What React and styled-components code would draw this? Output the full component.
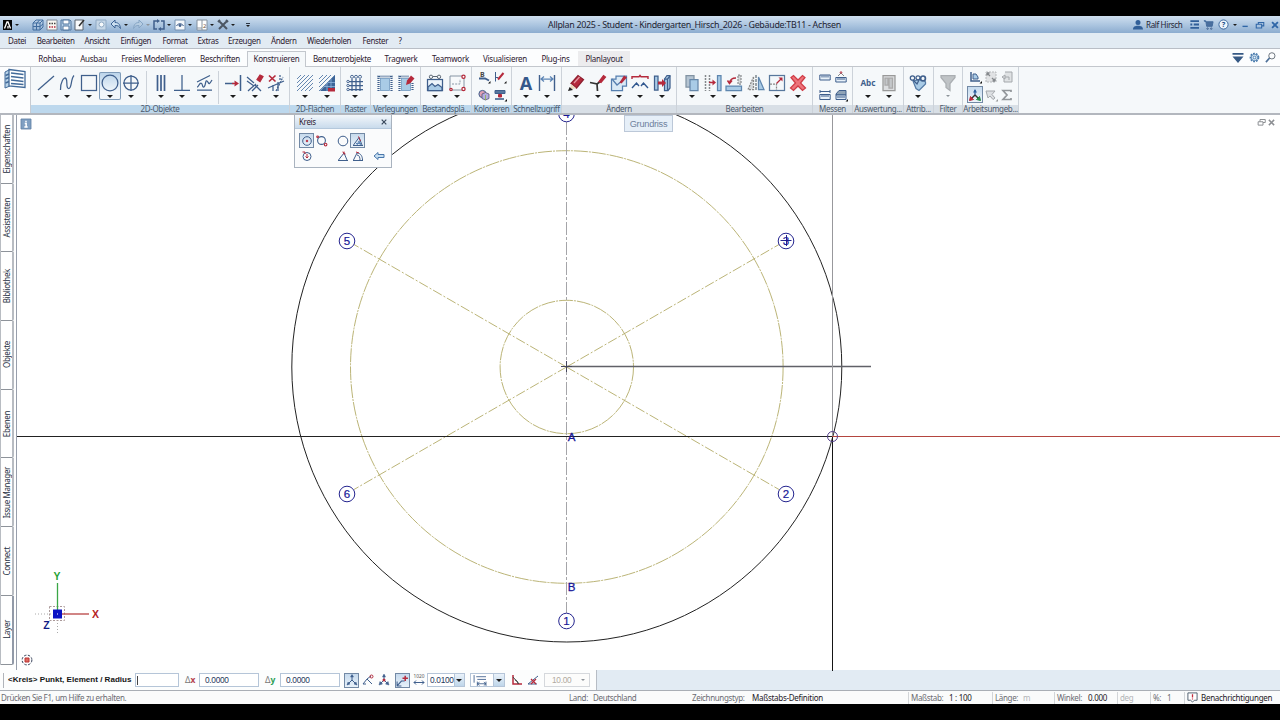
import styled, { createGlobalStyle, css } from 'styled-components';

const navy = '#3f5f8c';
const red = '#b52a3c';
const sky = '#a9cbe6';
const grey = '#a4a8ac';

/* ribbon drawings, all on an 18x18 grid */
const glyphs = {
  line: <path d='M1 16L17 2' />,
  spline: <path d='M2.5 16C2 9 6 2 8 4.500C10 7 7.500 14 10.500 14.500C14 15 12.500 5 16 1.500' />,
  rect: <rect x='1.5' y='1.5' width='15' height='15' />,
  circle: <circle cx='9' cy='9' r='7.9' />,
  axis: (
    <>
      <circle cx='9' cy='9' r='7' />
      <path d='M1 9H17M9 1V17' />
    </>
  ),
  parallel: <path d='M5.5 1V17M9 1V17M12.5 1V17' strokeWidth='1.7' />,
  perpendicular: <path d='M9 1V16M1 16.3H17' />,
  polyline: (
    <>
      <path d='M2 8L15 1.500M2 16H17' />
      <path d='M2 13C4 13 4 9 6 9S7 14 9 13S10 6 12 7S13 13 17 6' />
    </>
  ),
  extend: (
    <>
      <path d='M1 9.5H10M16.500 1V17' strokeWidth='1.5' />
      <path d='M8 9.5H12' stroke={red} />
      <path d='M10.500 6.500L15 9.500L10.500 12.500Z' fill={red} stroke='none' />
    </>
  ),
  trim: (
    <>
      <path d='M1 3L8 9M2 17C6 13 8 12 10 10M6 17L12 11M9 11L15 17M1 7L8 12' />
      <path d='M11 5.500L14 1L17 2.500L14 7.500Z' fill={red} stroke={red} />
    </>
  ),
  cut: (
    <>
      <path d='M1 14L17 7M6 17V11M11 17V8' />
      <path d='M13 1V6M9 17L16 3' strokeDasharray='2 1' />
      <path d='M2 1.500L8.500 7.500M8.500 1.500L2 7.500' stroke={red} strokeWidth='1.7' />
    </>
  ),
  hatch: (
    <path
      d='M1 5L5 1M1 9L9 1M1 13L13 1M1 17L17 1M5 17L17 5M9 17L17 9M13 17L17 13'
      stroke='#6587b1'
      strokeWidth='1'
    />
  ),
  hatchFill: (
    <>
      <path d='M17 1V17H2Z' fill='#3c6498' stroke='none' />
      <path d='M1 5L5 1M1 9L9 1M1 13L13 1M1 17L17 1' stroke='#6587b1' strokeWidth='1' />
      <path d='M9 9V17M13 5V14M6 12.500H17M10 8.500H17' stroke='#8fb4dc' strokeWidth='.8' />
      <path d='M10 14H17V17.500H10Z' fill={red} stroke='none' />
    </>
  ),
  grid: (
    <>
      <path d='M6 5V17M10 5V17M14 5V17M3 7.5H17M3 11.5H17M3 15.500H17' />
      <g strokeWidth='.9'>
        <circle cx='6' cy='2.800' r='1.500' />
        <circle cx='10' cy='2.800' r='1.500' />
        <circle cx='14' cy='2.800' r='1.500' />
        <circle cx='2' cy='7.5' r='1.200' />
        <circle cx='2' cy='11.5' r='1.200' />
        <circle cx='2' cy='15.500' r='1.200' />
      </g>
    </>
  ),
  laying: (
    <>
      <path d='M1.500 2.500H16.500M2.500 2V17M15.500 2V17' strokeWidth='2.2' strokeDasharray='1 1' />
      <rect x='4.500' y='4.500' width='9' height='12' fill={sky} stroke='#7098c0' strokeWidth='.8' />
    </>
  ),
  layingEdit: (
    <>
      <path d='M1.500 2.500H12M2.500 2V17M15.500 9V17' strokeWidth='2.2' strokeDasharray='1 1' />
      <rect x='4.500' y='4.500' width='9' height='12' fill={sky} stroke='#7098c0' strokeWidth='.8' />
      <path d='M9 11L10 6.500L14 1.500L17.500 4.500L13 9.500Z' fill={red} stroke='none' />
    </>
  ),
  picture: (
    <>
      <rect x='1.500' y='5.500' width='15' height='11' fill='#edf5fb' />
      <path d='M2 13L6 9.500L9 12.500L12 10.500L16 13.500V16.500H2Z' fill={sky} />
      <g stroke='#5d6874' strokeWidth='1'>
        <circle cx='5' cy='2.800' r='1.700' />
        <circle cx='13' cy='2.800' r='1.700' />
        <path d='M7 2.500H11' />
      </g>
    </>
  ),
  scan: (
    <>
      <path d='M2 2H16V16H2Z' fill='#f6f9fb' stroke='#7c8a9b' strokeWidth='.9' />
      <path d='M4 10H12V5' strokeDasharray='2 1.2' stroke='#7c8a9b' strokeWidth='.9' />
      <g stroke={red} fill='#fff'>
        <circle cx='15.500' cy='2.700' r='1.600' />
        <circle cx='15.500' cy='15' r='1.600' />
        <circle cx='3' cy='15.500' r='1.200' />
      </g>
    </>
  ),
  letterA: (
    <text x='9' y='15.500' textAnchor='middle' fill='#35588a' stroke='none' fontSize='18' fontWeight='700'>
      A
    </text>
  ),
  dimension: (
    <>
      <path d='M1.500 1V17M16.500 1V17' strokeWidth='1.4' />
      <path d='M3 5H15M6 2.500L3 5L6 7.500M12 2.500L15 5L12 7.500' stroke='#5d85b5' />
    </>
  ),
  pencil: (
    <>
      <path d='M4 9.500L11 1.500L16.500 5.500L9.500 14Z' fill={red} stroke='#8e2030' />
      <path d='M7 9L12.500 3' stroke='#e59aa3' />
      <path d='M4 10L9 14L3 16Z' fill='#ecdcc0' stroke='none' />
      <path d='M1 17L2.600 13L6 16Z' fill='#222' stroke='none' />
    </>
  ),
  brush: (
    <>
      <path d='M1 8.500L8 10L8.500 17M8 10L12 7' stroke='#333' strokeWidth='1.700' />
      <path d='M10 7.500L14.500 1.500L16.500 3L12 8.500Z' fill={red} stroke={red} />
    </>
  ),
  modifyArea: (
    <>
      <path d='M1.500 5H6V2H16.500V12H12.500V16.500H1.500Z' fill='#d9e9f5' stroke='#567faf' />
      <path d='M2 5L7 11L13 6' stroke='#567faf' />
      <path d='M9.500 8.500L14 1.500L17 3.500L11.500 9.500Z' fill={red} stroke='none' />
    </>
  ),
  stretch: (
    <>
      <path d='M1 5V2.800H8L9 1.500L10 2.800H17V5' stroke={red} strokeWidth='1.400' />
      <path d='M1 14L5.500 9L8 12M10 12L12.500 9L17 14' stroke='#31578f' strokeWidth='1.400' />
    </>
  ),
  shift: (
    <>
      <path d='M1.500 2H5V16H1.500Z' fill={sky} />
      <path d='M11.500 5L14 1.500H17V14L15 16.500H11.500Z' fill={sky} />
      <path d='M14.500 5V16M11.500 5H14.500L17 2' />
      <path d='M5 7.500H9V5L13 9L9 13V10.500H5Z' fill={red} stroke='none' />
    </>
  ),
  copy: (
    <>
      <path d='M3 1.500H11V13H3Z' fill='#b4c4d2' stroke='#8293a3' />
      <path d='M7 5.500H15V16.500H7Z' fill={sky} stroke='#6687a9' />
    </>
  ),
  move: (
    <>
      <path d='M1.500 1V17M5.500 1V17' stroke='#85898d' strokeWidth='1.500' strokeDasharray='2 1' />
      <path d='M5 8.500H10' stroke={red} strokeWidth='1.500' />
      <path d='M8.500 5.500L12 8.500L8.500 11.500Z' fill={red} stroke='none' />
      <path d='M13.500 1.500H17V16.500H13.500Z' fill={sky} stroke='#5e86af' />
    </>
  ),
  rotate: (
    <>
      <path d='M13 1H16V10H13Z' fill='#d3d6d9' stroke='#8d9093' strokeDasharray='2 1' />
      <path d='M1 12H16.500V16.500H1Z' fill={sky} stroke='#5e86af' />
      <path d='M11 4C7 4 5 5.500 4.500 9M2.500 6.500L4.500 9.500L7 6.500' stroke={red} strokeWidth='1.500' />
    </>
  ),
  mirror: (
    <>
      <path d='M6.500 3V15.500H1Z' stroke='#888' fill='#d3d7da' strokeDasharray='2 1' />
      <path d='M9 1V17' stroke='#67717c' strokeDasharray='3 1' />
      <path d='M11.500 3V15.500H17Z' fill={sky} stroke='#5e86af' />
    </>
  ),
  scale: (
    <>
      <rect x='1.500' y='1.500' width='15' height='15' fill='#f4f8fb' stroke='#58789d' />
      <path d='M2 10H8.500V16' stroke='#888' strokeDasharray='2 1' />
      <path d='M8.500 9.500L13 5' stroke={red} />
      <path d='M10.500 3.500H14.500V7.500Z' fill={red} stroke='none' />
    </>
  ),
  remove: (
    <path
      d='M2 3.500L4.500 1.500L9 6L13.500 1.500L16 3.500L11.500 9L16.500 14L13.500 16.500L9 12L4.500 16.500L1.500 14L6.500 9Z'
      fill='#ed747b'
      stroke='#d03c46'
    />
  ),
  abc: (
    <text x='9' y='12' textAnchor='middle' fill={navy} stroke='none' fontSize='8.2' fontWeight='700'>
      Abc
    </text>
  ),
  report: (
    <>
      <path d='M3 1.500H15V16.500H3Z' fill='#dcdee0' stroke='#999' />
      <path d='M5 4H8V11H5ZM9 4H12.500V14H9Z' fill='#c4c7ca' stroke='#aaa' />
    </>
  ),
  tag: (
    <>
      <path d='M4 7L14 5L16.500 8V10L10 16.500L7 14.500Z' fill={sky} stroke='#557ba6' />
      <g fill='#f5f8fa'>
        <circle cx='3.500' cy='4' r='2.200' />
        <circle cx='9' cy='3.800' r='2' />
        <circle cx='14' cy='4.400' r='2.400' strokeWidth='1.700' />
      </g>
      <path d='M4 6L8 10L10 6' />
    </>
  ),
  funnel: <path d='M2 1.500H16V3.500L11 9.500V16.500L7 13.500V9.500L2 3.500Z' fill='#bfc3c6' stroke='#aaaeb2' />,
};

/* small drawings, 12x12 grid */
const minis = {
  dot: (
    <>
      <circle cx='6' cy='6' r='4.3' />
      <circle cx='6' cy='6' r='.8' fill={red} stroke={red} />
    </>
  ),
  circlePts: (
    <>
      <circle cx='6' cy='6' r='3.6' />
      <g stroke={red} fill='#fff'>
        <circle cx='2.4' cy='2.6' r='.8' />
        <circle cx='9.8' cy='9.8' r='1.2' />
      </g>
    </>
  ),
  circleRed: (
    <>
      <circle cx='6' cy='6.5' r='4' />
      <path d='M6 4V8M4.500 6.500L6 8L7.500 6.500M1.500 2H4V4' stroke={red} />
    </>
  ),
  ring: <circle cx='6' cy='6' r='4.8' />,
  angle: (
    <>
      <path d='M1 10.5H11M1.500 10L7 3L10 10' />
      <path d='M5.500 2L8.500 4M7 1.500V4.500' stroke={red} />
    </>
  ),
  angleHatch: (
    <>
      <path d='M1 10.5H11M1.500 10L7 2.500L10 10' />
      <path d='M5 10L7 6L8.500 10M4 8.500H9' stroke='#5d85b5' />
      <path d='M6.500 1.500L8.500 6' stroke={red} />
    </>
  ),
  angleArc: (
    <>
      <path d='M1 10.5H11M1.500 10L5 3C9 3 10.500 7 10.500 10M5 5C7.500 5 8 8 8 10' />
      <path d='M4 2L7 3' stroke={red} />
    </>
  ),
  back: <path d='M1 6L5 2.500V4.500H11V7.500H5V9.500Z' fill='#c8dff1' stroke='#4977ab' />,
  fillPen: (
    <>
      <text x='2' y='6' fill='#444' stroke='none' fontSize='7' fontWeight='700'>B</text>
      <path d='M1 7.500H7L11 9.500' strokeWidth='1.800' />
      <path d='M12.500 10V12.500H10Z' fill='#111' stroke='none' />
    </>
  ),
  redPen: (
    <>
      <path d='M1.500 1V10.500M1.500 6.500H4' />
      <path d='M4 8.500L9.500 2' stroke={red} strokeWidth='2' />
      <path d='M12.500 10V12.500H10Z' fill='#111' stroke='none' />
    </>
  ),
  palette: (
    <>
      <circle cx='4.500' cy='5' r='3.600' fill='#dfa0b4' stroke={navy} />
      <path d='M4 5L7.500 3.500L11 5V9.500L7.500 11L4 9.500Z' fill='#b5addf' stroke='#557' strokeWidth='.8' />
      <path d='M7.500 6V11' stroke='#8b3' strokeWidth='.7' />
    </>
  ),
  roller: (
    <>
      <path d='M1 1.500H11V4.500H1Z' fill='#56779f' />
      <path d='M4.500 5.500H7.500V8H4.500Z' fill={red} stroke={red} />
      <path d='M1 10H10' strokeWidth='1.600' />
      <path d='M13 10V12.500H10.500Z' fill='#111' stroke='none' />
    </>
  ),
  ruler: (
    <>
      <path d='M.800 4H11.200V9H.800Z' fill='#e8f1f9' />
      <path d='M3 4.500V6.500M5 4.500V6.500M7 4.500V6.500M9 4.500V6.500' />
    </>
  ),
  rulerUp: (
    <>
      <path d='M.800 6.500H11.200V11H.800Z' fill='#e8f1f9' />
      <path d='M3 7V9M5 7V9M7 7V9M9 7V9' />
      <path d='M3 5L6 2L9 5' stroke='#888' />
      <circle cx='6' cy='1.500' r='.8' stroke={red} />
    </>
  ),
  rulerWide: (
    <>
      <path d='M1 1V4M11 1V4M1 2.500H11' />
      <path d='M.800 5.500H11.200V10.500H.800Z' fill='#e8f1f9' />
      <path d='M3 6V8M5 6V8M7 6V8M9 6V8' />
    </>
  ),
  rulerArea: (
    <>
      <path d='M1 5L4 1.500H11V6H1Z' fill='#8fa3b7' />
      <path d='M1 6H11V10.500H1ZM3 7V9M5 7V9M7 7V9M9 7V9' fill='#dce8f3' />
      <path d='M13 10V12.500H10.500Z' fill='#111' stroke='none' />
    </>
  ),
  plane: (
    <>
      <path d='M2 1V10H11' strokeWidth='1.500' />
      <path d='M4 3H7L9 6V8H4Z' fill={sky} />
      <path d='M13 10V12.500H10.500Z' fill='#111' stroke='none' />
    </>
  ),
  tripod: (
    <>
      <path d='M6 1V6L1.500 10.500M6 6L10.500 10.500' />
      <path d='M6 .5L4.500 3H7.500ZM1 11L4 10L2 8ZM11 11L8 10L10 8Z' fill={navy} strokeWidth='.5' />
    </>
  ),
  tripodColor: (
    <>
      <path d='M6 1V6' stroke='#2c5e9d' strokeWidth='1.300' />
      <path d='M6 0L4 3.500H8Z' fill='#2c5e9d' stroke='none' />
      <path d='M6 6L2 10' stroke='#333' strokeWidth='1.500' />
      <path d='M6 6L10 10' stroke='#333' strokeWidth='1.500' />
      <path d='M.500 11.500L1.500 7.500L4.500 10.500Z' fill={red} stroke={red} />
      <path d='M11.500 11.500L10.500 7.500L7.500 10.500Z' fill='#268a45' stroke='#268a45' />
    </>
  ),
  tripodRed: (
    <>
      <path d='M6 1V6L2 10M6 6L10 10' />
      <path d='M6 0L4.500 3H7.500ZM1 11L4.500 10L2 7.500ZM11 11L7.500 10L10 7.500Z' fill={navy} strokeWidth='.5' />
      <circle cx='6' cy='6' r='1.500' fill={red} stroke='none' />
    </>
  ),
  tripodPen: (
    <>
      <path d='M1 10L5 5L10 10M1 10H4M5 5L9 2' />
      <circle cx='9.500' cy='2.500' r='1.500' stroke={red} />
    </>
  ),
  snap: (
    <>
      <path d='M1 11L5 6.500H8M1 7V11H5' />
      <path d='M8.500 1.500V6.500M6 4H11' stroke={red} strokeWidth='1.400' />
    </>
  ),
  measure: (
    <>
      <text x='6' y='4.300' textAnchor='middle' fill='#555' stroke='none' fontSize='4.800'>1020</text>
      <path d='M1 8.500H11M3 6.500L1 8.500L3 10.500M9 6.500L11 8.500L9 10.500' />
    </>
  ),
  steps: <path d='M1 1V8M3 2.500H12M4 5H12M4 7V11M4 9H12M12 7V11M6 7.500L4 9L6 10.500M10 7.500L12 9L10 10.500' strokeWidth='.800' />,
  rightAngle: (
    <>
      <path d='M2 1V10H11' stroke={red} strokeWidth='1.500' />
      <path d='M2 3L8 10M4 6C6 6 7 8 7 10' stroke='#444' />
    </>
  ),
  noAngle: (
    <>
      <path d='M1 10L11 2M1 10H10' />
      <path d='M4 5L9 10M9 5L4 10' stroke={red} strokeWidth='1.300' />
    </>
  ),
  grey1: (
    <>
      <path d='M1 1H11V11H1Z' fill='#e0e2e4' stroke='#b6b9bc' strokeDasharray='2 1' />
      <path d='M2 2L5 5M2 2H4.500M2 2V4.500M10 10L7 7M10 10H7.500M10 10V7.500' stroke='#84888c' strokeWidth='1.300' />
    </>
  ),
  grey2: <path d='M4 1H11V11H3V7M1 6L4 4V8ZM4 6H8V9' stroke={grey} fill='#dfe2e4' />,
  grey3: (
    <>
      <path d='M1 2H10L7 5.500L10 9L8 10.500L5 7L3 9Z' stroke={grey} fill='#dcdfe2' />
      <path d='M13 10V12.500H10.500Z' fill='#999' stroke='none' />
    </>
  ),
  sigma: <path d='M10 3V1.500H2L6 6L2 10.500H10V9' stroke='#92969a' strokeWidth='1.700' />,
  cube: <path d='M1 4L4 1H11V8L8 11H1ZM1 4H8L11 1M8 4V11M4.500 4V11M1 7.500H8L11 5M7.500 1L5 4' stroke='#416c9f' />,
  calendar: (
    <>
      <path d='M1 1H11V11H1Z' fill='#f9f7f2' stroke='#7f8a99' />
      <path d='M3 4.500H10' stroke='#444' strokeWidth='1.600' strokeDasharray='1.500 1' />
      <path d='M3 8H10' stroke={red} strokeWidth='1.600' strokeDasharray='1.500 1' />
    </>
  ),
  save: (
    <>
      <path d='M1 1H10L11 2V11H1Z' fill='#b5cfe7' stroke='#51779f' />
      <path d='M3 1H9V5H3ZM3 7H9V11H3Z' fill='#fff' stroke='#51779f' />
    </>
  ),
  edit: (
    <>
      <path d='M1 1H9V11H1Z' fill='#f8fafc' stroke='#5b6570' />
      <path d='M5 7L10 1' stroke='#333' strokeWidth='1.600' />
    </>
  ),
  search: (
    <>
      <path d='M1 1H11V11H1Z' fill='#c6d7e7' stroke='#8ea9c4' />
      <circle cx='6.500' cy='5.500' r='2.500' fill='#f6f9fb' stroke='#8ea9c4' />
    </>
  ),
  undo: <path d='M1 5L5 1V3.500C9 3.500 10 6 10.500 9.500C9 7 8 6.500 5 6.500V9Z' fill='#cbdff0' stroke='#3c6395' />,
  redo: <path d='M11 5L7 1V3.500C3 3.500 2 6 1.500 9.500C3 7 4 6.500 7 6.500V9Z' fill='#b6cce1' stroke='#86a5c5' />,
  loop: (
    <>
      <path d='M4 2H1V10H4M8 10H11V2H8' strokeWidth='1.500' />
      <path d='M4 0V4L7 2ZM8 8V12L5 10Z' fill={navy} stroke='none' />
    </>
  ),
  eye: (
    <>
      <path d='M1 1H11V11H1Z' fill='#f5f8fb' stroke='#7490b0' />
      <path d='M2.500 7C4 4 8 4 9.500 7' />
      <circle cx='6' cy='6.500' r='1' fill={navy} />
    </>
  ),
  windows: (
    <>
      <path d='M1 1H11V11H1Z' fill='#fff' stroke='#83909d' />
      <path d='M6 1V11M1 9H6' stroke='#8a94a0' />
      <text x='7' y='9' fontSize='6' fill='#6f5a44' stroke='none'>2</text>
    </>
  ),
  tools: <path d='M2 10L10 2M2 2L10 10M1 3L3 1M9 1L11 3' stroke='#4b5663' strokeWidth='2' />,
  user: <path d='M6 0A2.900 2.900 0 0 1 6 6A2.900 2.900 0 0 1 6 0ZM0 11.500C0 8 2.500 7 6 7S12 8 12 11.500Z' fill='#315f98' stroke='none' />,
  menu: (
    <>
      <path d='M.500 1.500H12M.500 10.500H12' stroke='#315f98' strokeWidth='2.400' />
      <path d='M.500 6H3M5 6H12' stroke='#315f98' strokeWidth='2.400' />
    </>
  ),
  cart: (
    <>
      <path d='M1 2H3L4 8H10L11 3H3.500Z' fill='#4a6f9e' stroke='#426a9b' />
      <circle cx='5' cy='10.500' r='.8' />
      <circle cx='9' cy='10.500' r='.8' />
    </>
  ),
  help: (
    <>
      <circle cx='6' cy='6' r='5' fill='#eef5fb' stroke='#315f98' />
      <text x='6' y='9' textAnchor='middle' fontSize='8' fill='#24518a' stroke='none' fontWeight='700'>?</text>
    </>
  ),
  minimize: <path d='M2 8.500H9' stroke='#2f66a7' strokeWidth='1.800' />,
  restore: <path d='M4 5V3H10.500V7H8M1.500 5H8V9.500H1.500Z' stroke='#2f66a7' strokeWidth='1.300' />,
  close: <path d='M2.500 2.500L9.500 9.500M9.500 2.500L2.500 9.500' stroke='#2f66a7' strokeWidth='2.200' />,
  greyRestore: <path d='M4 5V2H11V6H8M1.500 5H8V9.500H1.500Z' stroke='#8b8e92' strokeWidth='1.300' />,
  greyClose: <path d='M2.500 2.500L9.500 9.500M9.500 2.500L2.500 9.500' stroke='#8b8e92' strokeWidth='2' />,
  collapse: <path d='M.500 1H11.500V2.800H.500ZM.500 4.500H11.500L6 11Z' fill='#365985' stroke='none' />,
  gear: (
    <>
      <circle cx='6' cy='6' r='4.400' stroke='#4779ac' strokeWidth='1.800' strokeDasharray='2 1.100' />
      <circle cx='6' cy='6' r='3.400' stroke='#4779ac' fill='#eaf4fb' />
      <circle cx='6' cy='6' r='1.500' stroke='#4779ac' />
    </>
  ),
  lens: (
    <>
      <circle cx='7.500' cy='4.200' r='3.400' stroke='#626b75' />
      <path d='M5 6.500L1 11' stroke='#4c6f98' strokeWidth='1.800' />
    </>
  ),
  notice: (
    <>
      <path d='M1 1H11V9H8L6 11L4 9H1Z' stroke='#495969' fill='#fff' />
      <path d='M6 2.500V6M6 7V8.200' stroke='#c22b3b' strokeWidth='1.400' />
    </>
  ),
  origin: (
    <>
      <circle cx='6' cy='6' r='4.900' stroke='#333e57' strokeDasharray='2.400 1.500' />
      <path d='M4 4H8V8H4Z' fill='#dd6a60' stroke='#b33' />
    </>
  ),
  info: (
    <>
      <path d='M0 0H12V12H0Z' fill='#7f9fc2' stroke='#607fa5' />
      <path d='M6 2V3.800M4.500 5.500H6.200V9.500M4 9.600H8' stroke='#fff' strokeWidth='1.800' />
    </>
  ),
};

const quickTools = [
  ['cube', 14], ['calendar', 14], ['save', 14], ['edit', 21, true], ['search', 15], ['undo', 21.5, true],
  ['redo', 21.5, true], ['loop', 21, true], ['eye', 21.5, true], ['windows', 21, true], ['tools', 30.5, true],
];

const menus = [
  ['Datei', 28.7], ['Bearbeiten', 47.8], ['Ansicht', 36], ['Einfügen', 42], ['Format', 35],
  ['Extras', 30.5], ['Erzeugen', 43], ['Ändern', 36], ['Wiederholen', 55.5], ['Fenster', 36], ['?', 16],
];

const tabs = [
  ['Rohbau', 42], ['Ausbau', 41], ['Freies Modellieren', 79], ['Beschriften', 54],
  ['Konstruieren', 59], ['Benutzerobjekte', 72], ['Tragwerk', 46], ['Teamwork', 53],
  ['Visualisieren', 56], ['Plug-ins', 45], ['Planlayout', 52],
];

const groups = [
  { name: '2D-Objekte', width: 259, own: true, shift: 2, items: ['line', 'spline', 'rect', 'circle', 'axis', '|', 'parallel', 'perpendicular', 'polyline', '|', 'extend', 'trim', 'cut'] },
  { name: '2D-Flächen', width: 51, own: true, shift: 2, items: ['hatch', 'hatchFill'] },
  { name: 'Raster', width: 30, own: true, items: ['grid'] },
  { name: 'Verlegungen', width: 50, own: true, items: ['laying', 'layingEdit'] },
  { name: 'Bestandsplä...', width: 51, own: true, items: ['picture', 'scan'] },
  { name: 'Kolorieren', width: 40, own: true, small: ['fillPen', 'redPen', 'palette', 'roller'] },
  { name: 'Schnellzugriff', width: 50, own: true, items: ['letterA', 'dimension'] },
  { name: 'Ändern', width: 115, items: ['pencil', 'brush', 'modifyArea', 'stretch', 'shift'] },
  { name: 'Bearbeiten', width: 136, shift: 1, items: ['copy', 'move', 'rotate', 'mirror', 'scale', 'remove'] },
  { name: 'Messen', width: 40, small: ['ruler', 'rulerUp', 'rulerWide', 'rulerArea'] },
  { name: 'Auswertung...', width: 51, shift: 1, items: ['abc', 'report'] },
  { name: 'Attrib...', width: 30, items: ['tag'] },
  { name: 'Filter', width: 29, items: ['funnel'] },
  { name: 'Arbeitsumgeb...', width: 56, small: ['plane', 'grey1', 'grey2', 'tripodColor', 'grey3', 'sigma'] },
];

const sideTabs = ['Eigenschaften', 'Assistenten', 'Bibliothek', 'Objekte', 'Ebenen', 'Issue Manager', 'Connect', 'Layer'];

const bubbles = [
  ['1', 566.5, 621], ['2', 786, 494], ['3', 786, 241],
  ['4', 566.5, 114], ['5', 347, 241], ['6', 347, 494],
];

const Glyph = ({ name, size = 18 }) => (
  <Svg width={size} height={size} viewBox='0 0 18 18' $w={1.25}>
    {glyphs[name]}
  </Svg>
);

const Mini = ({ name, size = 11 }) => (
  <Svg width={size} height={size} viewBox='0 0 12 12' $w={1}>
    {minis[name]}
  </Svg>
);

const TitleBar = () => (
  <Title>
    <QuickAccess>
      <Logo>
        <svg width='9' height='10' viewBox='0 0 9 10'>
          <path d='M1.500 8.500L4 2H5L7.500 8.500M5 6V8.500' fill='none' stroke='#fff' strokeWidth='1.300' />
        </svg>
      </Logo>
      <AppMenu><Arrow /></AppMenu>
      {quickTools.map(([name, w, arrow]) => (
        <Quick key={name} $w={w}>
          <Mini name={name} size={12} />
          {arrow && <Arrow $dim={name === 'redo'} />}
        </Quick>
      ))}
      <MoreMark><Arrow /></MoreMark>
    </QuickAccess>
    <Caption>Allplan 2025 - Student - Kindergarten_Hirsch_2026 - Gebäude:TB11 - Achsen</Caption>
    <Account>
      <Mini name='user' size={10} />
      <UserName>Ralf Hirsch</UserName>
      <Mini name='menu' size={9} />
      <Mini name='cart' size={11} />
      <Mini name='help' size={11} />
      <Arrow />
      <WindowButtons>
        <Mini name='minimize' size={9} />
        <Mini name='restore' size={10} />
        <Mini name='close' size={10} />
      </WindowButtons>
    </Account>
  </Title>
);

const Ribbon = () => (
  <RibbonBar>
    <Browser>
      <svg width='22' height='21' viewBox='0 0 22 21'>
        <path d='M1 4L6 1.500V18L1 20Z' fill='#b9d3e8' stroke='#436b9a' />
        <path d='M5 1.500L21 3.500V19.500L5 18Z' fill='#fff' stroke='#436b9a' strokeWidth='1.300' />
        <path d='M1.500 7.500L5 6M1.500 11L5 9.500M1.500 15L5 13.500M7 5L19.500 6.500M7 8.500L19.500 10M7 12L19.500 13.500M7 15.500L19.500 16.500' stroke='#436b9a' strokeWidth='1.500' />
      </svg>
      <Arrow $big />
    </Browser>
    {groups.map((g) => (
      <Group key={g.name} $width={g.width}>
        {g.items && (
          <Tools $shift={g.shift}>
            {g.items.map((name, i) =>
              name === '|' ? (
                <Divider key={i} />
              ) : (
                <Tool key={name} $active={name === 'circle'}>
                  <Glyph name={name} />
                  <Arrow $dim={name === 'funnel'} $big={name !== 'funnel'} />
                </Tool>
              )
            )}
          </Tools>
        )}
        {g.small && (
          <SmallTools $cols={g.small.length / 2}>
            {g.small.map((name) => (
              <SmallTool key={name} $active={name === 'tripodColor'}>
                <Mini name={name} size={12} />
              </SmallTool>
            ))}
          </SmallTools>
        )}
        <GroupName $own={g.own}>{g.name}</GroupName>
      </Group>
    ))}
  </RibbonBar>
);

const CirclePalette = () => (
  <Palette>
    <PaletteHead>
      Kreis
      <svg width='6' height='6' viewBox='0 0 6 6'>
        <path d='M.700 .700L5.300 5.300M5.300 .700L.700 5.300' stroke='#38485c' strokeWidth='1.200' />
      </svg>
    </PaletteHead>
    <PaletteBody>
      <PaletteTool $active><Mini name='dot' size={12} /></PaletteTool>
      <PaletteTool><Mini name='circlePts' size={13} /></PaletteTool>
      <span />
      <PaletteTool><Mini name='ring' size={12} /></PaletteTool>
      <PaletteTool $active><Mini name='angleHatch' size={12} /></PaletteTool>
      <span />
      <PaletteTool><Mini name='circleRed' size={12} /></PaletteTool>
      <span />
      <span />
      <PaletteTool><Mini name='angle' size={12} /></PaletteTool>
      <PaletteTool><Mini name='angleArc' size={12} /></PaletteTool>
      <PaletteTool><Mini name='back' size={12} /></PaletteTool>
    </PaletteBody>
  </Palette>
);

const Drawing = () => (
  <Plan viewBox='17 115 1263 556'>
    <g fill='none' stroke='#b3ab68' strokeWidth='.9'>
      <circle cx='566.8' cy='367' r='216.3' strokeDasharray='14 1 2 1' />
      <circle cx='566.8' cy='367' r='66.700' strokeDasharray='14 1 2 1' />
      <path d='M566.500 367L354 244.500M566.500 367L779 244.500M566.500 367L354 489.500M566.500 367L779 489.500' strokeDasharray='10 2 2 2' />
    </g>
    <path d='M566.500 122V613' stroke='#a5a5a9' strokeDasharray='13 2 3 2' />
    <circle cx='566.800' cy='367' r='275' fill='none' stroke='#222' />
    <path d='M567 366.500H871' stroke='#606168' strokeWidth='1.300' />
    <path d='M561 366.500H572M566.500 361V372' stroke='#45465c' />
    <path d='M832.500 115V436' stroke='#98989c' />
    <path d='M832.500 436V671' stroke='#151515' />
    <path d='M17 436.500H832' stroke='#222' />
    <path d='M832 436.500H1280' stroke='#b4453f' />
    <circle cx='832.500' cy='436.500' r='5' fill='none' stroke='#54408c' />
    <g fill='none' stroke='#25258f'>
      {bubbles.map(([n, x, y]) => (
        <circle key={n} cx={x} cy={y} r='7.800' />
      ))}
      <path d='M780.500 240.500H791.500M786.500 235V246' />
    </g>
    <g fill='#171798' fontSize='11.500' textAnchor='middle'>
      {bubbles.map(([n, x, y]) => (
        <text key={n} x={x} y={y + 4.1} stroke='#171798' strokeWidth='.2'>{n}</text>
      ))}
      <text x='571.500' y='441' stroke='#171798' strokeWidth='.3'>A</text>
      <text x='571.500' y='590.500' stroke='#171798' strokeWidth='.3'>B</text>
    </g>
    <g fill='none'>
      <path d='M35 614H52M57.500 620V633' stroke='#aaa' strokeDasharray='1 2' />
      <rect x='49.500' y='606.500' width='15' height='14' stroke='#a99' strokeDasharray='2 1.500' />
      <path d='M57.500 583V610' stroke='#3aa646' strokeWidth='1.300' />
      <path d='M62 614H89' stroke='#b94343' strokeWidth='1.300' />
      <rect x='53' y='609.500' width='9' height='9' fill='#0b12c4' />
      <rect x='57' y='613.500' width='1' height='1' fill='#fff' />
    </g>
    <g fontWeight='700' fontSize='10.500' textAnchor='middle'>
      <text x='57' y='580' fill='#28a336'>Y</text>
      <text x='95.500' y='618' fill='#b51e25'>X</text>
      <text x='46.500' y='628.500' fill='#101c86'>Z</text>
    </g>
  </Plan>
);

const CommandLine = () => (
  <CommandBar>
    <Grip />
    <Prompt>&lt;Kreis&gt; Punkt, Element / Radius</Prompt>
    <Field $w={44} $pad={1}><Caret /></Field>
    <Delta $w={20}>Δ<b>x</b></Delta>
    <Field $w={60}>0.0000</Field>
    <Delta $w={21} $green>Δ<b>y</b></Delta>
    <Field $w={60}>0.0000</Field>
    <CommandTools>
      <BarTool $active><Mini name='tripod' size={12} /></BarTool>
      <BarTool><Mini name='tripodPen' size={12} /></BarTool>
      <BarTool><Mini name='tripodRed' size={12} /></BarTool>
      <BarTool $active $gap={3}><Mini name='snap' size={13} /></BarTool>
      <BarTool><Mini name='measure' size={12} /></BarTool>
    </CommandTools>
    <Combo $w={38}>0.0100<Drop><Arrow $big /></Drop></Combo>
    <Combo $w={35} $gap={5}><Mini name='steps' size={13} /><Drop><Arrow $big /></Drop></Combo>
    <AngleTools>
      <BarTool><Mini name='rightAngle' size={12} /></BarTool>
      <BarTool><Mini name='noAngle' size={12} /></BarTool>
    </AngleTools>
    <DisabledCombo>10.00<Arrow $dim /></DisabledCombo>
    <BarRest />
  </CommandBar>
);

const StatusLine = () => (
  <Status>
    <Cell $w={569}><Hint>Drücken Sie F1, um Hilfe zu erhalten.</Hint></Cell>
    <Cell $w={24}>Land:</Cell>
    <Cell $w={99}>Deutschland</Cell>
    <Cell $w={60}>Zeichnungstyp:</Cell>
    <Cell $w={156} $dark>Maßstabs-Definition</Cell>
    <Cell $w={41} $rule>Maßstab:</Cell>
    <Cell $w={43} $dark>1 : 100</Cell>
    <Cell $w={31} $rule>Länge:</Cell>
    <Cell $w={31} $pale>m</Cell>
    <Cell $w={34} $rule>Winkel:</Cell>
    <Cell $w={29} $dark>0.000</Cell>
    <Cell $w={33} $rule $pale>deg</Cell>
    <Cell $w={17} $rule>%:</Cell>
    <Cell $w={17}>1</Cell>
    <Cell $w={96} $rule $dark>
      <Mini name='notice' size={11} />
      Benachrichtigungen
    </Cell>
  </Status>
);

const App = () => (
  <Frame>
    <GlobalStyle />
    <TitleBar />
    <MenuBar>
      {menus.map(([name, w]) => (
        <MenuItem key={name} $w={w}>{name}</MenuItem>
      ))}
    </MenuBar>
    <TabBar>
      {tabs.map(([name, w]) => (
        <Tab key={name} $w={w} $active={name === 'Konstruieren'} $tinted={name === 'Planlayout'}>
          {name}
        </Tab>
      ))}
      <TabTools>
        <Mini name='collapse' size={12} />
        <Mini name='gear' size={11} />
        <Mini name='lens' size={11} />
      </TabTools>
    </TabBar>
    <Ribbon />
    <Workspace>
      <SideBar>
        {sideTabs.map((name) => (
          <SideTab key={name} $active={name === 'Layer'}>
            <span>{name}</span>
          </SideTab>
        ))}
      </SideBar>
      <Viewport>
        <Drawing />
        <InfoBadge><Mini name='info' size={10} /></InfoBadge>
        <OriginBadge><Mini name='origin' size={12} /></OriginBadge>
        <ViewName>Grundriss</ViewName>
        <ViewButtons>
          <Mini name='greyRestore' size={9} />
          <Mini name='greyClose' size={9} />
        </ViewButtons>
        <CirclePalette />
      </Viewport>
    </Workspace>
    <CommandLine />
    <StatusLine />
  </Frame>
);

const GlobalStyle = createGlobalStyle`
  * {
    box-sizing: border-box;
  }
  body {
    margin: 0;
    background: #000;
    overflow: hidden;
  }
`;

const Svg = styled.svg`
  display: block;
  flex: none;
  overflow: visible;
  fill: none;
  stroke: ${navy};
  stroke-width: ${(p) => p.$w};
  font-family: 'Noto Sans', sans-serif;
  letter-spacing: 0;
`;

const Frame = styled.div`
  width: 1280px;
  height: 720px;
  padding: 16px 0;
  display: flex;
  flex-direction: column;
  background: #000;
  color: #2e2030;
  font-family: 'Noto Sans', sans-serif;
  font-size: 8px;
  letter-spacing: -0.35px;
  line-height: 10px;
  white-space: nowrap;
`;

const Arrow = styled.i`
  flex: none;
  width: 0;
  border: ${(p) => (p.$big ? 2.5 : 2)}px solid transparent;
  border-width: ${(p) => (p.$big ? '3px 3px 0' : '2px 2px 0')};
  border-top-color: ${(p) => (p.$dim ? '#8d9399' : '#1c1c1c')};
`;

const Title = styled.header`
  height: 17px;
  flex: none;
  display: flex;
  align-items: center;
  background: linear-gradient(#cfdfef, #aac4df 55%, #8caccf);
`;

const QuickAccess = styled.div`
  width: 550px;
  display: flex;
  align-items: center;
  padding-left: 3px;
`;

const Logo = styled.div`
  width: 9px;
  height: 10px;
  background: #050505;
`;

const AppMenu = styled.div`
  width: 19px;
  padding-left: 3px;
  display: flex;
`;

const Quick = styled.div`
  width: ${(p) => p.$w}px;
  height: 14px;
  padding-left: 1px;
  display: flex;
  align-items: center;
  gap: 2px;
`;

const MoreMark = styled.div`
  display: flex;
  padding-top: 1px;
  border-top: 1px solid #2c3746;
`;

const Caption = styled.div`
  width: 587px;
  font-size: 8.9px;
  letter-spacing: -0.3px;
  color: #1f2433;
`;

const Account = styled.div`
  display: flex;
  align-items: center;
  gap: 4px;
`;

const UserName = styled.span`
  width: 40px;
  margin-left: -1px;
  color: #1f2433;
`;

const WindowButtons = styled.div`
  display: flex;
  align-items: center;
  gap: 5px;
`;

const MenuBar = styled.nav`
  height: 16px;
  flex: none;
  display: flex;
  align-items: center;
  padding-left: 8px;
  background: #e2ebf3;
  border-bottom: 1px solid #b9bec6;
`;

const MenuItem = styled.div`
  width: ${(p) => p.$w}px;
`;

const TabBar = styled.nav`
  height: 18px;
  flex: none;
  display: flex;
  align-items: stretch;
  padding-left: 31px;
  background: #fcfdfe;
  border-bottom: 1px solid #c3c7cd;
`;

const Tab = styled.div`
  width: ${(p) => p.$w}px;
  display: flex;
  align-items: center;
  justify-content: center;
  padding-top: 2px;
  letter-spacing: -0.25px;
  ${(p) =>
    p.$active &&
    css`
      margin: 2px 0 -1px;
      padding: 0 0 2px;
      background: #f5f8fa;
      border: 1px solid #c3c7cd;
      border-bottom: 0;
    `}
  ${(p) =>
    p.$tinted &&
    css`
      margin-top: 2px;
      padding: 0;
      background: #ececee;
    `}
`;

const TabTools = styled.div`
  margin-left: auto;
  padding: 0 4px;
  display: flex;
  align-items: center;
  gap: 5px;
`;

const RibbonBar = styled.section`
  height: 48px;
  flex: none;
  display: flex;
  background: #f5f8fa;
  border-bottom: 2px solid #b3b7be;
`;

const Browser = styled.div`
  width: 31px;
  padding-top: 1px;
  display: flex;
  flex-direction: column;
  align-items: center;
  gap: 6px;
  background: #fcfdfe;
  border-right: 1px solid #c8ccd2;
`;

const Group = styled.div`
  width: ${(p) => p.$width}px;
  flex: none;
  display: flex;
  flex-direction: column;
  border-right: 1px solid #ccd2d9;
`;

const Tools = styled.div`
  flex: 1;
  display: flex;
  justify-content: center;
  align-items: flex-start;
  padding-top: 5px;
  padding-left: ${(p) => p.$shift || 0}px;
`;

const Tool = styled.div`
  width: 21.4px;
  height: 28px;
  padding-top: 2px;
  display: flex;
  flex-direction: column;
  align-items: center;
  gap: 3px;
  border-radius: 2px;
  ${(p) =>
    p.$active &&
    css`
      background: linear-gradient(#b9d3ea, #f1f6fa 70%);
      box-shadow: inset 0 0 0 1px #7f9bb8;
    `}
`;

const Divider = styled.div`
  width: 1px;
  height: 33px;
  margin: -1px 3.6px 0;
  background: #ccd2d9;
`;

const SmallTools = styled.div`
  flex: 1;
  display: grid;
  grid-template-columns: repeat(${(p) => p.$cols}, 16px);
  grid-template-rows: 18px 17px;
  justify-content: center;
  padding-top: 1px;
`;

const SmallTool = styled.div`
  display: flex;
  align-items: center;
  justify-content: center;
  ${(p) =>
    p.$active &&
    css`
      background: linear-gradient(#c3d9ee, #f0f6fb);
      box-shadow: inset 0 0 0 1px #7289a5;
    `}
`;

const GroupName = styled.div`
  height: 8px;
  flex: none;
  line-height: 8px;
  text-align: center;
  color: #4c596c;
  background: ${(p) => (p.$own ? '#bdd8ed' : '#d8dfe6')};
`;

const Workspace = styled.main`
  flex: 1;
  min-height: 0;
  display: flex;
  background: #fff;
`;

const SideBar = styled.aside`
  width: 17px;
  flex: none;
  display: flex;
  flex-direction: column;
  border-right: 1px solid #989fac;
`;

const SideTab = styled.div`
  width: 14px;
  height: 68.7px;
  flex: none;
  display: flex;
  align-items: center;
  justify-content: center;
  border: 1px solid #b8bcc2;
  border-width: 0 2px 1px 1px;
  border-bottom-color: #8e939a;
  border-radius: 0 0 2px 0;
  color: #26303f;
  ${(p) => p.$active && 'border-right-color: #929aa8;'}
  span {
    writing-mode: vertical-rl;
    transform: rotate(180deg);
  }
`;

const Viewport = styled.div`
  flex: 1;
  position: relative;
`;

const Plan = styled.svg`
  display: block;
  width: 1263px;
  height: 556px;
  font-family: 'Liberation Sans', sans-serif;
  letter-spacing: 0;
`;

const InfoBadge = styled.div`
  position: absolute;
  left: 4px;
  top: 4px;
`;

const OriginBadge = styled.div`
  position: absolute;
  left: 4px;
  bottom: 4px;
`;

const ViewName = styled.div`
  position: absolute;
  left: 607px;
  top: 0;
  width: 49px;
  height: 17px;
  border: 1px solid #bcc8d8;
  background: #e6eff8;
  color: #6e819d;
  font-family: 'Liberation Sans', sans-serif;
  font-size: 9.2px;
  letter-spacing: -0.25px;
  line-height: 17px;
  text-align: center;
`;

const ViewButtons = styled.div`
  position: absolute;
  right: 4px;
  top: 3px;
  display: flex;
  gap: 1px;
`;

const Palette = styled.div`
  position: absolute;
  left: 277px;
  top: 0;
  width: 98px;
  height: 53px;
  background: #fafbfc;
  border: 1px solid #a9b3bf;
  border-top: 0;
`;

const PaletteHead = styled.div`
  height: 14px;
  padding: 0 4px;
  display: flex;
  align-items: center;
  justify-content: space-between;
  background: linear-gradient(#f3f7fb, #c9dbec);
  border-bottom: 1px solid #b4c8dc;
`;

const PaletteBody = styled.div`
  padding: 4px 0 0 4px;
  display: grid;
  grid-template-columns: 15px 15px 6px 15px 15px 21px;
  grid-template-rows: 15px 15px;
`;

const PaletteTool = styled.div`
  display: flex;
  align-items: center;
  justify-content: center;
  &:last-child {
    justify-content: flex-end;
    padding-right: 1px;
  }
  ${(p) =>
    p.$active &&
    css`
      background: linear-gradient(#c4d8eb, #eef5fb);
      box-shadow: inset 0 0 0 1px #7289a5;
    `}
`;

const CommandBar = styled.section`
  height: 21px;
  flex: none;
  display: flex;
  align-items: center;
  background: #fcfdfd;
  border-bottom: 1px solid #a9aeb5;
  letter-spacing: 0;
`;

const Grip = styled.div`
  width: 4px;
  height: 15px;
  margin-right: 4px;
  border-right: 1px solid #b0b4ba;
`;

const Prompt = styled.div`
  width: 127px;
  font-family: 'Liberation Sans', sans-serif;
  font-size: 8.05px;
  font-weight: 700;
  color: #151515;
`;

const Field = styled.div`
  width: ${(p) => p.$w}px;
  height: 14px;
  padding-left: ${(p) => p.$pad || 5}px;
  display: flex;
  align-items: center;
  border: 1px solid #b5c5d8;
  background: #fff;
  color: #25375c;
  font-family: 'Liberation Sans', sans-serif;
  font-size: 8.3px;
  letter-spacing: -0.3px;
`;

const Caret = styled.i`
  width: 1px;
  height: 9px;
  background: #444;
`;

const Delta = styled.div`
  width: ${(p) => p.$w}px;
  padding-left: 6px;
  color: #777;
  font-size: 8.5px;
  b {
    color: ${(p) => (p.$green ? '#2a9d54' : '#b64250')};
  }
`;

const CommandTools = styled.div`
  width: 87px;
  padding-left: 4px;
  display: flex;
  align-items: center;
  gap: 1px;
`;

const BarTool = styled.div`
  width: 15px;
  height: 15px;
  margin-left: ${(p) => p.$gap || 0}px;
  display: flex;
  align-items: center;
  justify-content: center;
  ${(p) =>
    p.$active &&
    css`
      background: linear-gradient(#c3d8ec, #eaf3fb);
      box-shadow: inset 0 0 0 1px #7289a5;
    `}
`;

const Combo = styled.div`
  width: ${(p) => p.$w}px;
  height: 14px;
  margin-left: ${(p) => p.$gap || 0}px;
  padding-left: 2px;
  display: flex;
  align-items: center;
  justify-content: space-between;
  border: 1px solid #b5c5d8;
  background: #fff;
  color: #25375c;
  font-family: 'Liberation Sans', sans-serif;
  font-size: 8.3px;
  letter-spacing: -0.3px;
`;

const Drop = styled.div`
  width: 11px;
  height: 12px;
  display: grid;
  place-items: center;
  background: linear-gradient(#e9f2fa, #bfd6ea);
  border-left: 1px solid #b5c5d8;
`;

const AngleTools = styled.div`
  width: 39px;
  padding-left: 4px;
  display: flex;
  gap: 1px;
`;

const DisabledCombo = styled.div`
  width: 46px;
  height: 14px;
  padding: 0 4px 0 7px;
  display: flex;
  align-items: center;
  justify-content: space-between;
  border: 1px solid #d5d8dc;
  background: #fcfcfb;
  color: #b0aaa0;
  font-family: 'Liberation Sans', sans-serif;
  font-size: 8.3px;
  letter-spacing: -0.3px;
`;

const BarRest = styled.div`
  flex: 1;
  height: 100%;
  margin-left: 6px;
  border-left: 1px solid #b7bdc5;
  background: #e2ebf3;
`;

const Status = styled.footer`
  height: 13px;
  flex: none;
  display: flex;
  align-items: center;
  background: #fafbfb;
  color: #6b6b72;
`;

const Cell = styled.div`
  width: ${(p) => p.$w}px;
  height: 12px;
  flex: none;
  display: flex;
  align-items: center;
  gap: 3px;
  color: ${(p) => (p.$dark ? '#1e1926' : p.$pale ? '#b2b4b7' : 'inherit')};
  letter-spacing: ${(p) => (p.$dark ? -0.28 : -0.35)}px;
  ${(p) =>
    p.$rule &&
    css`
      padding-left: 2px;
      border-left: 1px solid #d2d5d8;
    `}
`;

const Hint = styled.span`
  padding-left: 1px;
`;

export default App;
